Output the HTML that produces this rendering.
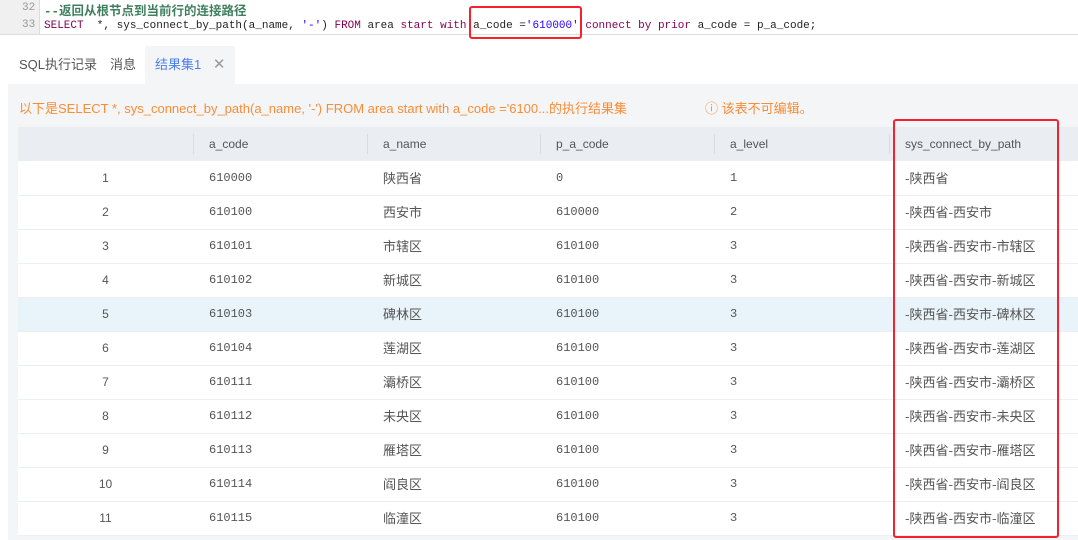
<!DOCTYPE html>
<html><head><meta charset="utf-8"><style>
*{margin:0;padding:0;box-sizing:border-box}
body{width:1078px;height:540px;background:#fff;position:relative;overflow:hidden;font-family:"Liberation Sans","Noto Sans CJK SC",sans-serif;}
.gut{position:absolute;left:0;top:0;width:40px;height:34px;background:#f0f0f0;border-right:1px solid #ddd}
.ln{position:absolute;left:22px;font:11px "Liberation Mono",monospace;color:#999}
.code{position:absolute;left:44px;font:11px "Liberation Mono","Noto Sans CJK SC",monospace;white-space:pre;color:#222}
.edline{position:absolute;left:0;top:34px;width:1078px;height:1px;background:#ddd}
.kw{color:#7f0055}.str{color:#2a00ff}
.tab{position:absolute;top:46px;height:38px;line-height:38px;font-size:13px;color:#555}
.panel{position:absolute;left:8px;top:84px;width:1070px;height:456px;background:#f4f5f7}
.msg{position:absolute;top:98px;font-size:13px;color:#fa8c35}
table{position:absolute;left:18px;top:127px;width:1060px;border-collapse:collapse;background:#fff;font-size:12px;color:#555}
th{height:34px;background:#eaedf1;font-weight:normal;text-align:left;padding-left:16px;font-size:12px;color:#555;position:relative}
th+th:before{content:"";position:absolute;left:0;top:7px;height:20px;width:1px;background:#d8dce2}
td{height:34px;padding-left:16px;border-bottom:1px solid #ebeef2;font-family:"Liberation Mono","Noto Sans CJK SC",monospace;line-height:16px;vertical-align:middle}
td.cn{font-family:"Noto Sans CJK SC",sans-serif;font-size:13px;line-height:16px}
td.i{text-align:center;padding-left:0;font-family:"Liberation Sans",sans-serif}
tr.h td{background:#e8f4fa}
.red{position:absolute;border:2px solid #f5222d;border-radius:3px}
</style></head><body>
<div class="gut"></div>
<div class="ln" style="top:2px">32</div>
<div class="ln" style="top:19px">33</div>
<div class="code" style="top:0px;font:bold 12.5px 'Liberation Mono','Noto Sans CJK SC',monospace;color:#3f7f5f">--返回从根节点到当前行的连接路径</div>
<div class="code" style="top:20px"><span class="kw">SELECT</span>  *, sys_connect_by_path(a_name, <span class="str">'-'</span>) <span class="kw">FROM</span> area <span class="kw">start with</span> a_code =<span class="str">'610000'</span> <span class="kw">connect by prior</span> a_code = p_a_code;</div>
<div class="edline"></div>
<div class="red" style="left:469px;top:6px;width:113px;height:33px"></div>
<div class="tab" style="left:19px">SQL执行记录</div>
<div class="tab" style="left:110px">消息</div>
<div class="tab" style="left:145px;width:90px;background:#f4f5f7;padding-left:10px;color:#4c7ef0">结果集1 <span style="color:#999;margin-left:8px;font-size:15px">✕</span></div>
<div class="panel"></div>
<div class="msg" style="left:19px">以下是SELECT *, sys_connect_by_path(a_name, '-') FROM area start with a_code ='6100...的执行结果集</div>
<div class="msg" style="left:705px">ⓘ 该表不可编辑。</div>
<table>
<tr><th style="width:175px"></th><th style="width:174px">a_code</th><th style="width:173px">a_name</th><th style="width:174px">p_a_code</th><th style="width:175px">a_level</th><th>sys_connect_by_path</th></tr>
<tr><td class="i">1</td><td>610000</td><td class="cn">陕西省</td><td>0</td><td>1</td><td class="cn">-陕西省</td></tr>
<tr><td class="i">2</td><td>610100</td><td class="cn">西安市</td><td>610000</td><td>2</td><td class="cn">-陕西省-西安市</td></tr>
<tr><td class="i">3</td><td>610101</td><td class="cn">市辖区</td><td>610100</td><td>3</td><td class="cn">-陕西省-西安市-市辖区</td></tr>
<tr><td class="i">4</td><td>610102</td><td class="cn">新城区</td><td>610100</td><td>3</td><td class="cn">-陕西省-西安市-新城区</td></tr>
<tr class="h"><td class="i">5</td><td>610103</td><td class="cn">碑林区</td><td>610100</td><td>3</td><td class="cn">-陕西省-西安市-碑林区</td></tr>
<tr><td class="i">6</td><td>610104</td><td class="cn">莲湖区</td><td>610100</td><td>3</td><td class="cn">-陕西省-西安市-莲湖区</td></tr>
<tr><td class="i">7</td><td>610111</td><td class="cn">灞桥区</td><td>610100</td><td>3</td><td class="cn">-陕西省-西安市-灞桥区</td></tr>
<tr><td class="i">8</td><td>610112</td><td class="cn">未央区</td><td>610100</td><td>3</td><td class="cn">-陕西省-西安市-未央区</td></tr>
<tr><td class="i">9</td><td>610113</td><td class="cn">雁塔区</td><td>610100</td><td>3</td><td class="cn">-陕西省-西安市-雁塔区</td></tr>
<tr><td class="i">10</td><td>610114</td><td class="cn">阎良区</td><td>610100</td><td>3</td><td class="cn">-陕西省-西安市-阎良区</td></tr>
<tr><td class="i">11</td><td>610115</td><td class="cn">临潼区</td><td>610100</td><td>3</td><td class="cn">-陕西省-西安市-临潼区</td></tr>
</table>
<div class="red" style="left:893px;top:119px;width:166px;height:419px"></div>
</body></html>
